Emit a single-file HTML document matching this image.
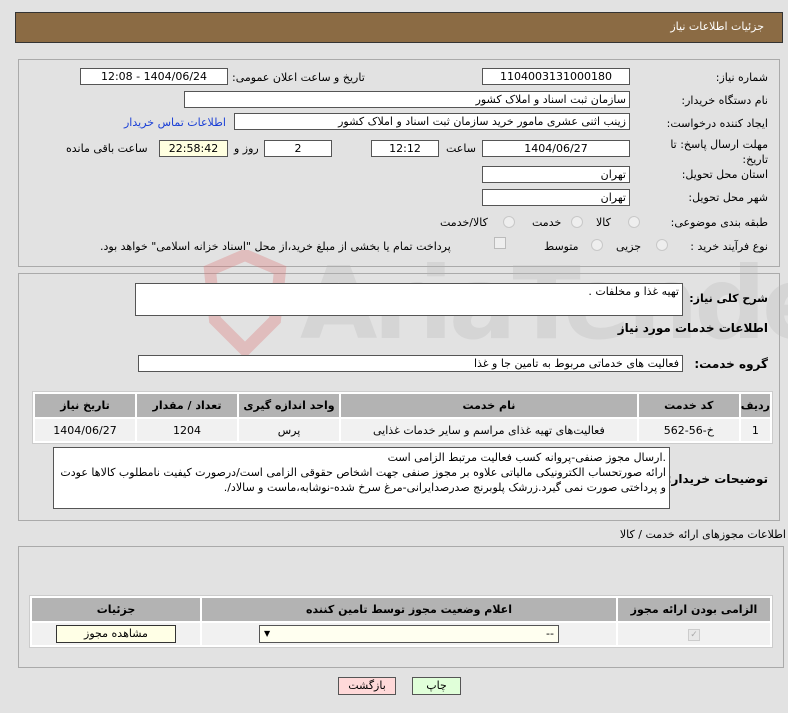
<!DOCTYPE html>
<html><head><meta charset="utf-8"><style>
*{box-sizing:border-box;margin:0;padding:0}
body{width:788px;height:713px;background:#e2e2e2;font-family:"DejaVu Sans","Liberation Sans",sans-serif;font-size:11px;color:#000;position:relative;overflow:hidden;direction:rtl}
.a{position:absolute;white-space:nowrap}
.in{position:absolute;background:#fff;border:1px solid #555;height:17px;line-height:15px;padding:0 3px;text-align:center;white-space:nowrap;overflow:hidden}
.l{text-align:right}
.panel{position:absolute;border:1px solid #aaa;background:#e2e2e2}
.rad{position:absolute;width:12px;height:12px;border-radius:50%;border:1px solid #c8c8c8;background:#eee}
.b{font-weight:bold}
table{position:absolute;border-collapse:separate;border-spacing:2px;background:#fff;border:1px solid #ccc}
th{background:#b3b3b3;font-weight:bold;height:23px;font-size:11px}
td{background:#f1f1f1;height:22px;text-align:center}
</style></head><body>
<div class="a" style="left:15px;top:12px;width:768px;height:31px;background:#8b6b44;border:1px solid #333"></div>
<div class="a" style="right:24px;top:20px;color:#fff;font-size:11px">جزئیات اطلاعات نیاز</div>

<div class="panel" style="left:18px;top:59px;width:762px;height:208px"></div>
<div class="panel" style="left:18px;top:273px;width:762px;height:248px"></div>
<svg class="a" style="left:195px;top:250px" width="100" height="110" viewBox="0 0 100 110"><path d="M15 20 L50 5 L85 20 L80 70 L50 100 L20 70 Z" fill="none" stroke="rgba(220,120,120,.35)" stroke-width="12"/><path d="M35 40 L65 40 L55 60 L45 60 Z" fill="rgba(220,120,120,.35)"/></svg>
<div class="a" style="left:300px;top:245px;font-size:100px;color:rgba(180,180,180,.28);font-weight:bold;direction:ltr;letter-spacing:-4px">AriaTender.neT</div>

<div class="a" style="right:20px;top:71px">شماره نیاز:</div>
<div class="in" style="left:482px;top:68px;width:148px">1104003131000180</div>
<div class="a" style="left:232px;top:71px">تاریخ و ساعت اعلان عمومی:</div>
<div class="in" style="left:80px;top:68px;width:148px">1404/06/24 - 12:08</div>
<div class="a" style="right:20px;top:94px">نام دستگاه خریدار:</div>
<div class="in l" style="left:184px;top:91px;width:446px">سازمان ثبت اسناد و املاک کشور</div>
<div class="a" style="right:20px;top:117px">ایجاد کننده درخواست:</div>
<div class="in l" style="left:234px;top:113px;width:396px">زینب اثنی عشری مامور خرید سازمان ثبت اسناد و املاک کشور</div>
<div class="a" style="left:124px;top:116px;color:#1a3fd6">اطلاعات تماس خریدار</div>
<div class="a" style="right:20px;top:137px;line-height:15px;text-align:right;white-space:normal;width:120px">مهلت ارسال پاسخ: تا تاریخ:</div>
<div class="in" style="left:482px;top:140px;width:148px">1404/06/27</div>
<div class="a" style="left:446px;top:142px">ساعت</div>
<div class="in" style="left:371px;top:140px;width:68px">12:12</div>
<div class="in" style="left:264px;top:140px;width:68px">2</div>
<div class="a" style="left:234px;top:142px">روز و</div>
<div class="in" style="left:159px;top:140px;width:69px;background:#ffffe0">22:58:42</div>
<div class="a" style="left:66px;top:142px">ساعت باقی مانده</div>
<div class="a" style="right:20px;top:168px">استان محل تحویل:</div>
<div class="in l" style="left:482px;top:166px;width:148px">تهران</div>
<div class="a" style="right:20px;top:191px">شهر محل تحویل:</div>
<div class="in l" style="left:482px;top:189px;width:148px">تهران</div>
<div class="a" style="right:20px;top:216px">طبقه بندی موضوعی:</div>
<div class="rad" style="left:628px;top:216px"></div><div class="a" style="left:596px;top:216px">کالا</div>
<div class="rad" style="left:571px;top:216px"></div><div class="a" style="left:532px;top:216px">خدمت</div>
<div class="rad" style="left:503px;top:216px"></div><div class="a" style="left:440px;top:216px">کالا/خدمت</div>
<div class="a" style="right:20px;top:240px">نوع فرآیند خرید :</div>
<div class="rad" style="left:656px;top:239px"></div><div class="a" style="left:616px;top:240px">جزیی</div>
<div class="rad" style="left:591px;top:239px"></div><div class="a" style="left:544px;top:240px">متوسط</div>
<div class="a" style="left:494px;top:237px;width:12px;height:12px;border:1px solid #bbb;background:#eee"></div>
<div class="a" style="left:100px;top:240px">پرداخت تمام یا بخشی از مبلغ خرید،از محل "اسناد خزانه اسلامی" خواهد بود.</div>

<div class="a b" style="right:20px;top:292px;font-size:11px">شرح کلی نیاز:</div>
<div class="in l" style="left:135px;top:283px;width:548px;height:33px">تهیه غذا و مخلفات .</div>
<div class="a b" style="right:20px;top:321px;font-size:12px">اطلاعات خدمات مورد نیاز</div>
<div class="a b" style="right:20px;top:357px;font-size:12px">گروه خدمت:</div>
<div class="in l" style="left:138px;top:355px;width:545px">فعالیت های خدماتی مربوط به تامین جا و غذا</div>
<table style="left:32px;top:391px;width:741px">
<tr><th style="width:28px">ردیف</th><th style="width:100px">کد خدمت</th><th>نام خدمت</th><th style="width:100px">واحد اندازه گیری</th><th style="width:100px">تعداد / مقدار</th><th style="width:100px">تاریخ نیاز</th></tr>
<tr><td>1</td><td>خ-56-562</td><td>فعالیت‌های تهیه غذای مراسم و سایر خدمات غذایی</td><td>پرس</td><td>1204</td><td>1404/06/27</td></tr>
</table>
<div class="a b" style="right:20px;top:472px;font-size:12px">توضیحات خریدار:</div>
<div class="in l" style="left:53px;top:447px;width:617px;height:62px;line-height:15px;white-space:normal;padding-top:2px">.ارسال مجوز صنفی-پروانه کسب فعالیت مرتبط الزامی است<br>ارائه صورتحساب الکترونیکی مالیاتی علاوه بر مجوز صنفی جهت اشخاص حقوقی الزامی است/درصورت کیفیت نامطلوب کالاها عودت و پرداختی صورت نمی گیرد.زرشک پلوبرنج صدرصدایرانی-مرغ سرخ شده-نوشابه،ماست و سالاد/.</div>

<div class="a" style="right:2px;top:528px">اطلاعات مجوزهای ارائه خدمت / کالا</div>
<div class="panel" style="left:18px;top:546px;width:766px;height:122px"></div>
<table style="left:29px;top:595px;width:744px">
<tr><th style="width:152px">الزامی بودن ارائه مجوز</th><th>اعلام وضعیت مجوز توسط تامین کننده</th><th style="width:168px">جزئیات</th></tr>
<tr><td><span style="display:inline-block;width:12px;height:12px;border:1px solid #ccc;background:#e8e8e8;color:#aaa;font-size:9px;line-height:11px">✓</span></td>
<td><div style="margin:0 auto;width:300px;height:18px;border:1px solid #555;background:#fffff0;display:flex;justify-content:space-between;padding:0 4px;line-height:16px"><span>--</span><span style="font-size:8px">▼</span></div></td>
<td><div style="margin:0 auto;width:120px;height:18px;border:1px solid #333;background:#ffffe6;line-height:16px">مشاهده مجوز</div></td></tr>
</table>
<div class="a" style="left:338px;top:677px;width:58px;height:18px;border:1px solid #555;background:#ffd9d9;text-align:center;line-height:16px">بازگشت</div>
<div class="a" style="left:412px;top:677px;width:49px;height:18px;border:1px solid #555;background:#e0ffd9;text-align:center;line-height:16px">چاپ</div>
</body></html>
